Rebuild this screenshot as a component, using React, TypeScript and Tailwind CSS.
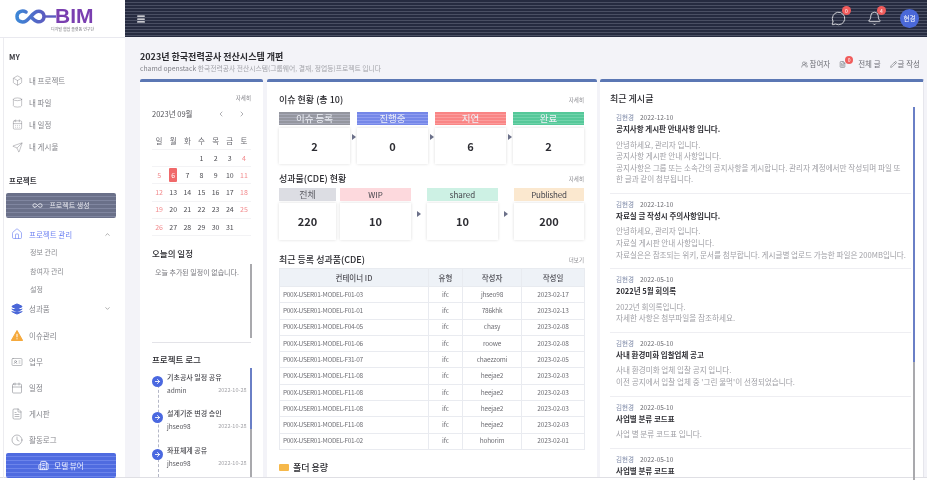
import {
  Bell,
  Box,
  CalendarDays,
  ChevronDown,
  ChevronLeft,
  ChevronRight,
  ChevronUp,
  Clock,
  FileText,
  House,
  IdCard,
  Infinity as InfinityIcon,
  Layers,
  Menu,
  MessageCircle,
  Pencil,
  Send,
  UsersRound,
  ArrowRight,
  Building2,
  Calendar,
  Cylinder,
} from "lucide-react";

const weeks = [
  ["", "", "", "1", "2", "3", "4"],
  ["5", "6", "7", "8", "9", "10", "11"],
  ["12", "13", "14", "15", "16", "17", "18"],
  ["19", "20", "21", "22", "23", "24", "25"],
  ["26", "27", "28", "29", "30", "31", ""],
];

const logs = [
  { title: "기초공사 일정 공유", user: "admin" },
  { title: "설계기준 변경 승인", user: "jhseo98" },
  { title: "좌표체계 공유", user: "jhseo98" },
];

const issues = [
  { label: "이슈 등록", value: "2", color: "bg-[repeating-linear-gradient(180deg,#94969f_0px,#94969f_2px,#a7a9b6_2px,#a7a9b6_3px)]" },
  { label: "진행중", value: "0", color: "bg-[repeating-linear-gradient(180deg,#7587e8_0px,#7587e8_2px,#8f9df0_2px,#8f9df0_3px)]" },
  { label: "지연", value: "6", color: "bg-[repeating-linear-gradient(180deg,#f98585_0px,#f98585_2px,#fb9d9d_2px,#fb9d9d_3px)]" },
  { label: "완료", value: "2", color: "bg-[repeating-linear-gradient(180deg,#55c899_0px,#55c899_2px,#70d3ab_2px,#70d3ab_3px)]" },
];

const rows = [
  ["P00X-USER01-MODEL-F01-03", "ifc", "jhseo98", "2023-02-17"],
  ["P00X-USER01-MODEL-F01-01", "ifc", "786khk", "2023-02-13"],
  ["P00X-USER01-MODEL-F04-05", "ifc", "chasy", "2023-02-08"],
  ["P00X-USER01-MODEL-F01-06", "ifc", "roowe", "2023-02-08"],
  ["P00X-USER01-MODEL-F31-07", "ifc", "chaezzomi", "2023-02-05"],
  ["P00X-USER01-MODEL-F11-08", "ifc", "heejae2", "2023-02-03"],
  ["P00X-USER01-MODEL-F11-08", "ifc", "heejae2", "2023-02-03"],
  ["P00X-USER01-MODEL-F11-08", "ifc", "heejae2", "2023-02-03"],
  ["P00X-USER01-MODEL-F11-08", "ifc", "heejae2", "2023-02-03"],
  ["P00X-USER01-MODEL-F01-02", "ifc", "hohorim", "2023-02-01"],
];

const posts = [
  {
    date: "2022-12-10",
    title: "공지사항 게시판 안내사항 입니다.",
    body: [
      "안녕하세요, 관리자 입니다.",
      "공지사항 게시판 안내 사항입니다.",
      "공지사항은 그룹 또는 소속간의 공지사항을 게시합니다. 관리자 계정에서만 작성되며 파일 또한 글과 같이 첨부됩니다.",
    ],
  },
  {
    date: "2022-12-10",
    title: "자료실 글 작성시 주의사항입니다.",
    body: [
      "안녕하세요, 관리자 입니다.",
      "자료실 게시판 안내 사항입니다.",
      "자료실은은 참조되는 위키, 문서를 첨부합니다. 게시글별 업로드 가능한 파일은 200MB입니다.",
    ],
  },
  {
    date: "2022-05-10",
    title: "2022년 5월 회의록",
    body: ["2022년 회의록입니다.", "자세한 사항은 첨부파일을 참조하세요."],
  },
  {
    date: "2022-05-10",
    title: "사내 환경미화 입찰업체 공고",
    body: ["사내 환경미화 업체 입찰 공지 입니다.", "이전 공지에서 입찰 업체 중 '그린 물먹'이 선정되었습니다."],
  },
  { date: "2022-05-10", title: "사업별 분류 코드표", body: ["사업 별 분류 코드표 입니다."] },
  { date: "2022-05-10", title: "사업별 분류 코드표", body: [] },
];

const navIcon = "text-[#7f8087]";

const NavRow = ({ icon, label, h = "h-[22.3px]" }: { icon: React.ReactNode; label: string; h?: string }) => (
  <div className={`flex items-center gap-[6px] pl-[5px] ${h}`}>
    <span className="flex w-[12px] justify-center">{icon}</span>
    <span className="text-[7.5px] text-[#85868c]">{label}</span>
  </div>
);

const Scrollbar = ({ thumb, className }: { thumb: string; className: string }) => (
  <div className={`w-[2.5px] shrink-0 bg-[#a9a9ad] ${className}`}>
    <div className={`w-full bg-[#6a7fc6] ${thumb}`} />
  </div>
);

const Arrow = () => (
  <div className="h-0 w-0 border-y-[3px] border-l-[4px] border-y-transparent border-l-[#6b7089]" />
);

const ValueCard = ({ value, h }: { value: string; h: string }) => (
  <div className={`flex items-center justify-center bg-white text-[11px] font-bold text-[#2d2d33] shadow-[0_0_3px_rgba(0,0,0,0.14)] ${h}`}>
    {value}
  </div>
);

const Heading = ({ title, more }: { title: string; more: string }) => (
  <div className="flex h-[12px] items-center justify-between">
    <span className="text-[9px] font-medium text-[#2b2b30]">{title}</span>
    <span className="text-[5.5px] text-[#8b8b90]">{more}</span>
  </div>
);

export default function App() {
  return (
    <div className="h-[481px] w-[927px] overflow-hidden bg-white [font-family:'Noto_Sans_CJK_KR','Noto_Sans',sans-serif] blur-[0.3px]">
      <div className="flex h-[477px]">
        <aside className="flex w-[125px] shrink-0 flex-col bg-white">
          <div className="h-[38px] shrink-0 border-b border-[#e9e9ef] pt-[7px] pl-[15px]">
            <div className="flex h-[18px] items-center">
              <svg width="41" height="15" viewBox="0 0 41 15" fill="none">
                <defs>
                  <linearGradient id="logoGrad" x1="0" x2="1" y1="0" y2="0">
                    <stop offset="0" stopColor="#3d86d6" />
                    <stop offset="1" stopColor="#5b5cc0" />
                  </linearGradient>
                </defs>
                <path
                  d="M11 3C7.5 .8 2 2.600 2 7.500s5.500 6.700 9 4.500c4-2.500 6.500-8 11-9.500 3.500-1 7 1 7 5s-3.500 6-7 5c-2.500-.7-4-2.500-5.500-4"
                  stroke="url(#logoGrad)"
                  strokeWidth="3.500"
                  strokeLinecap="round"
                />
                <path d="M28 7.500h13" stroke="#5b5cc0" strokeWidth="2.400" />
              </svg>
              <span className="-ml-[1px] text-[21px] leading-[18px] font-bold text-[#7a3fb0] [font-family:'Liberation_Sans',sans-serif]">
                BIM
              </span>
            </div>
            <div className="mt-[2px] ml-[36px] text-[4px] leading-[4px] text-[#77777d]">디지털 협업 플랫폼 연구단</div>
          </div>
          <div className="ml-[3px] flex flex-1 flex-col border-l border-[#ececf0] pr-[9px] pl-[2px]">
            <div className="mt-[12px] flex h-[14px] items-center pl-[3px] text-[7.5px] font-bold text-[#3a3a40]">MY</div>
            <div className="mt-[5px]">
              <NavRow icon={<Box size={11} strokeWidth={1} className={navIcon} />} label="내 프로젝트" />
              <NavRow icon={<Cylinder size={11} strokeWidth={1} className={navIcon} />} label="내 파일" />
              <NavRow icon={<CalendarDays size={11} strokeWidth={1} className={navIcon} />} label="내 일정" />
              <NavRow icon={<Send size={11} strokeWidth={1} className={navIcon} />} label="내 게시물" />
            </div>
            <div className="mt-[15px] flex h-[14px] items-center pl-[3px] text-[7.5px] font-bold text-[#3a3a40]">프로젝트</div>
            <div className="mt-[6px] flex h-[25px] items-center justify-center gap-[6px] rounded-[2px] bg-[repeating-linear-gradient(180deg,#6a7089_0px,#6a7089_3px,#8086a0_3px,#8086a0_4px)] text-[7px] text-[#e4e5ec]">
              <InfinityIcon size={11} />
              프로젝트 생성
            </div>
            <div className="mt-[7px] flex h-[18px] items-center gap-[6px] pl-[5px] text-[#6f83f2]">
              <span className="flex w-[12px] justify-center">
                <House size={12} strokeWidth={1.3} />
              </span>
              <span className="flex-1 text-[7.5px]">프로젝트 관리</span>
              <ChevronUp size={7} className="mr-[5px] text-[#777]" />
            </div>
            {["정보 관리", "참여자 관리", "설정"].map((s) => (
              <div key={s} className="flex h-[18.5px] items-center pl-[24px] text-[7px] text-[#8a8b90]">
                {s}
              </div>
            ))}
            <div className="flex h-[20px] items-center gap-[6px] pl-[5px]">
              <span className="flex w-[12px] justify-center">
                <Layers size={12} fill="#4a67d8" className="text-[#4a67d8]" />
              </span>
              <span className="flex-1 text-[7.5px] text-[#85868c]">성과품</span>
              <ChevronDown size={7} className="mr-[5px] text-[#777]" />
            </div>
            <div className="mt-[4px]">
              <NavRow
                h="h-[26px]"
                icon={
                  <svg width="12" height="11" viewBox="0 0 12 11">
                    <path d="M6 .5 11.700 10.500H.3Z" fill="#f5a93c" stroke="#f5a93c" strokeLinejoin="round" />
                    <path d="M6 3.800v3.500M6 8.300v1" stroke="#fff" strokeWidth="1" />
                  </svg>
                }
                label="이슈관리"
              />
              <NavRow h="h-[26px]" icon={<IdCard size={12} strokeWidth={1} className={navIcon} />} label="업무" />
              <NavRow h="h-[26px]" icon={<Calendar size={12} strokeWidth={1.1} className={navIcon} />} label="일정" />
              <NavRow h="h-[26px]" icon={<FileText size={12} strokeWidth={1.1} className={navIcon} />} label="게시판" />
              <NavRow h="h-[26px]" icon={<Clock size={12} strokeWidth={1.1} className={navIcon} />} label="활동로그" />
            </div>
            <div className="flex h-[25px] items-center justify-center gap-[5px] rounded-[2px] bg-[repeating-linear-gradient(180deg,#4f6be0_0px,#4f6be0_3px,#6c84ea_3px,#6c84ea_4px)] text-[7.5px] text-[#eef0ff]">
              <Building2 size={11} />
              모델 뷰어
            </div>
          </div>
        </aside>

        <div className="flex min-w-0 flex-1 flex-col bg-[#f3f3f8]">
          <header className="flex h-[37px] shrink-0 items-center bg-[repeating-linear-gradient(180deg,#262b40_0px,#262b40_2px,#4a4f63_2px,#4a4f63_3px)] pr-[8px] pl-[11px]">
            <Menu size={10} strokeWidth={3} className="text-white" />
            <div className="ml-auto flex items-center">
              <div className="relative mr-[21px]">
                <MessageCircle size={15} strokeWidth={1.2} className="text-white" />
                <span className="absolute -top-[5px] -right-[5px] flex h-[9px] w-[9px] items-center justify-center rounded-full bg-[#f05c5c] text-[5px] text-white">0</span>
              </div>
              <div className="relative mr-[18px]">
                <Bell size={15} strokeWidth={1.2} className="text-white" />
                <span className="absolute -top-[5px] -right-[4px] flex h-[9px] w-[9px] items-center justify-center rounded-full bg-[#f05c5c] text-[5px] text-white">4</span>
              </div>
              <div className="flex h-[19px] w-[19px] items-center justify-center rounded-full bg-[#4a68d8] text-[6.5px] text-white">현경</div>
            </div>
          </header>

          <div className="flex h-[42px] shrink-0 items-start pr-[7px] pl-[15px]">
            <div className="pt-[13px]">
              <div className="text-[9px] leading-[14px] font-bold text-[#2b2b30]">2023년 한국전력공사 전산시스템 개편</div>
              <div className="text-[6.8px] leading-[8px] text-[#a3a4aa]">
                <span className="text-[#808188]">chamd openstack</span> 한국전력공사 전산시스템(그룹웨어, 결재, 정업등)프로젝트 입니다
              </div>
            </div>
            <div className="ml-auto flex items-center gap-[9px] pt-[22px] text-[7.5px] leading-[10px] text-[#6d6e75]">
              <span className="flex items-center gap-[2px]">
                <UsersRound size={7} />
                참여자
              </span>
              <span className="relative flex items-center gap-[12px]">
                <FileText size={7} />
                <span className="absolute -top-[3px] left-[6px] flex h-[8px] w-[8px] items-center justify-center rounded-full bg-[#f05c5c] text-[5px] text-white">0</span>
                전체 글
              </span>
              <span className="flex items-center gap-[1px]">
                <Pencil size={7} />
                글 작성
              </span>
            </div>
          </div>

          <div className="ml-[15px] flex min-h-0 flex-1 items-stretch">
            {/* 달력 / 일정 / 로그 */}
            <section className="flex w-[123px] shrink-0 flex-col overflow-hidden rounded-t-[2px] border-t-[3px] border-[#5b77b4] bg-white px-[12px]">
              <div className="mt-[11px] h-[10px] text-right text-[5.5px] leading-[10px] text-[#7f7f85]">자세히</div>
              <div className="mt-[4px] flex h-[14px] items-center text-[7.5px] text-[#54545a]">
                <span>2023년 09월</span>
                <ChevronLeft size={8} className="ml-[25px] text-[#8a8a90]" />
                <ChevronRight size={8} className="ml-[13px] text-[#8a8a90]" />
              </div>
              <div className="mt-[11px] grid h-[18px] grid-cols-7 items-center border-b border-[#f3f3f5] text-center text-[7.5px] text-[#6b6b72]">
                {["일", "월", "화", "수", "목", "금", "토"].map((d) => (
                  <span key={d}>{d}</span>
                ))}
              </div>
              {weeks.map((w, i) => (
                <div key={i} className="grid h-[17.2px] grid-cols-7 items-center border-b border-[#f3f3f5] text-center text-[7px] text-[#4d4d53]">
                  {w.map((d, j) =>
                    d === "6" ? (
                      <span key={j} className="mx-auto flex h-[14px] w-[8px] items-center justify-center rounded-[1px] bg-[#f0696a] text-white">
                        {d}
                      </span>
                    ) : (
                      <span key={j} className={j === 0 || j === 6 ? "text-[#f28b8e]" : ""}>
                        {d}
                      </span>
                    ),
                  )}
                </div>
              ))}
              <div className="mt-[10px] flex h-[14px] items-center text-[8.5px] font-medium text-[#2b2b30]">오늘의 일정</div>
              <div className="flex h-[78px] shrink-0">
                <p className="flex-1 pt-[7px] pl-[3px] text-[7px] leading-[10px] text-[#77777d]">오늘 추가된 일정이 없습니다.</p>
                <Scrollbar thumb="h-0" className="mt-[4px] -mr-[1px]" />
              </div>
              <div className="mt-[4px] border-b border-[#e3e3e8]" />
              <div className="mt-[9px] flex h-[14px] shrink-0 items-center text-[8.5px] font-medium text-[#2b2b30]">프로젝트 로그</div>
              <div className="flex min-h-0 flex-1 pt-[2px]">
                <div className="relative flex-1 pr-[3px]">
                  <div className="absolute top-[12px] bottom-0 left-[5.5px] border-l border-dashed border-[#b4b7c6]" />
                  {logs.map((l) => (
                    <div key={l.title} className="relative flex h-[36.3px] items-start">
                      <span className="mt-[8px] flex h-[11px] w-[11px] shrink-0 items-center justify-center rounded-full bg-[#4a68e0]">
                        <ArrowRight size={7} strokeWidth={3} className="text-white" />
                      </span>
                      <div className="ml-[4px] flex-1 pt-[3px]">
                        <div className="text-[7px] leading-[13px] font-medium text-[#45454b]">{l.title}</div>
                        <div className="flex items-center justify-between text-[6.5px] leading-[13px] text-[#55555b]">
                          <span>{l.user}</span>
                          <span className="text-[5.5px] text-[#a5a5aa]">2022-10-28</span>
                        </div>
                      </div>
                    </div>
                  ))}
                </div>
                <Scrollbar thumb="h-[61px]" className="-mr-[1px] h-[113px]" />
              </div>
            </section>

            {/* 이슈 / 성과품 현황 */}
            <section className="ml-[4px] flex w-[330px] shrink-0 flex-col overflow-hidden rounded-t-[2px] border-t-[3px] border-[#5b77b4] bg-white pr-[13px] pl-[12px]">
              <div className="mt-[12px]">
                <Heading title="이슈 현황 (총 10)" more="자세히" />
              </div>
              <div className="mt-[6px] flex">
                {issues.map((c, i) => (
                  <div key={c.label} className="flex items-start">
                    {i > 0 && (
                      <div className="flex w-[7px] justify-center pt-[22px]">
                        <Arrow />
                      </div>
                    )}
                    <div className="w-[71px]">
                      <div className={`flex h-[13px] items-center justify-center text-[9.5px] text-[#eef0f6] ${c.color}`}>{c.label}</div>
                      <div className="mt-[3px]">
                        <ValueCard value={c.value} h="h-[36px]" />
                      </div>
                    </div>
                  </div>
                ))}
              </div>
              <div className="mt-[9px]">
                <Heading title="성과물(CDE) 현황" more="자세히" />
              </div>
              <div className="mt-[3px] flex">
                <div className="w-[57px]">
                  <div className="flex h-[13px] items-center justify-center bg-[#dcdde3] text-[9px] text-[#5e5e66]">전체</div>
                  <div className="mt-[2px]">
                    <ValueCard value="220" h="h-[37px]" />
                  </div>
                </div>
                <div className="ml-[4px] w-[71px]">
                  <div className="flex h-[13px] items-center justify-center bg-[#fdd9dd] text-[8px] text-[#45454c]">WIP</div>
                  <div className="mt-[2px]">
                    <ValueCard value="10" h="h-[37px]" />
                  </div>
                </div>
                <div className="flex w-[16px] justify-center pt-[23px]">
                  <Arrow />
                </div>
                <div className="w-[71px]">
                  <div className="flex h-[13px] items-center justify-center bg-[#cdf1e4] text-[8px] text-[#45454c]">shared</div>
                  <div className="mt-[2px]">
                    <ValueCard value="10" h="h-[37px]" />
                  </div>
                </div>
                <div className="flex w-[16px] justify-center pt-[23px]">
                  <Arrow />
                </div>
                <div className="w-[70px]">
                  <div className="flex h-[13px] items-center justify-center bg-[#fbe8cf] text-[8px] tracking-[-0.2px] text-[#45454c]">Published</div>
                  <div className="mt-[2px]">
                    <ValueCard value="200" h="h-[37px]" />
                  </div>
                </div>
              </div>
              <div className="mt-[14px]">
                <Heading title="최근 등록 성과품(CDE)" more="더보기" />
              </div>
              <table className="mt-[2px] w-[305px] table-fixed border-collapse text-center text-[6.5px] text-[#6f6f75]">
                <colgroup>
                  <col className="w-[149px]" />
                  <col className="w-[34px]" />
                  <col className="w-[59px]" />
                  <col className="w-[63px]" />
                </colgroup>
                <thead>
                  <tr className="h-[18px] bg-[#eef2f7] text-[7.5px] text-[#4f4f56]">
                    {["컨테이너 ID", "유형", "작성자", "작성일"].map((t) => (
                      <th key={t} className="border border-[#e8ebf0] font-medium">
                        {t}
                      </th>
                    ))}
                  </tr>
                </thead>
                <tbody>
                  {rows.map((r, i) => (
                    <tr key={i} className="h-[16.3px]">
                      <td className="border border-[#e9ebf0] pl-[3px] text-left tracking-[-0.3px]">{r[0]}</td>
                      <td className="border border-[#e9ebf0]">{r[1]}</td>
                      <td className="border border-[#e9ebf0] tracking-[-0.2px]">{r[2]}</td>
                      <td className="border border-[#e9ebf0] tracking-[-0.2px]">{r[3]}</td>
                    </tr>
                  ))}
                </tbody>
              </table>
              <div className="mt-[11px] flex items-center gap-[4px]">
                <span className="h-[7px] w-[10px] rounded-[1px] bg-[#f6b84a]" />
                <span className="text-[9px] font-medium text-[#2b2b30]">폴더 용량</span>
              </div>
            </section>

            {/* 최근 게시글 */}
            <section className="relative ml-[3px] flex w-[324px] shrink-0 flex-col rounded-t-[2px] border-t-[3px] border-r border-[#5b77b4] border-r-[#e6e6ec] bg-white pl-[10px]">
              <div className="mt-[9px] h-[16px] shrink-0 text-[9px] leading-[16px] font-medium text-[#2b2b30]">최근 게시글</div>
              <div className="flex min-h-0 flex-1">
                <div className="min-w-0 flex-1 overflow-hidden">
                  {posts.map((p, i) => (
                    <div key={i} className="border-b border-[#eeeef2] px-[6px] pt-[5px] pb-[8px] last:border-b-0">
                      <div className="flex gap-[6px] text-[6.5px] leading-[11px]">
                        <span className="text-[#7e8aa8]">김현경</span>
                        <span className="text-[#6c6c72]">{p.date}</span>
                      </div>
                      <div className="text-[7.5px] leading-[11.5px] font-bold text-[#2f2f35]">{p.title}</div>
                      <div className="mt-[4px] text-[7.6px] leading-[11.6px] text-[#a0a0a6]">
                        {p.body.map((b) => (
                          <p key={b} className={b.includes("200MB") ? "whitespace-nowrap" : ""}>
                            {b}
                          </p>
                        ))}
                      </div>
                    </div>
                  ))}
                </div>
                <Scrollbar thumb="h-[255px]" className="relative z-10 mr-[8px] ml-[2px] h-[373px]" />
              </div>
            </section>
          </div>
        </div>
      </div>
      <div className="h-[4px] border-t border-[#dfdfe4] bg-white" />
    </div>
  );
}
